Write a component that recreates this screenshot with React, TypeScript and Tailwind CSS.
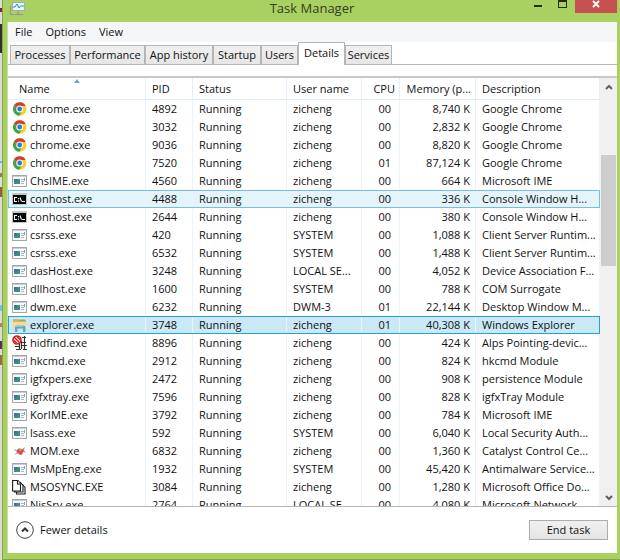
import clsx from "clsx";

type Kind = "chrome" | "app" | "console" | "folder" | "hid" | "mom" | "docs";

interface Process {
  kind: Kind;
  name: string;
  pid: string;
  user: string;
  cpu: string;
  memory: string;
  description: string;
}

const tabs = [
  { label: "Processes", width: "w-15" },
  { label: "Performance", width: "w-[75px]" },
  { label: "App history", width: "w-[68px]" },
  { label: "Startup", width: "w-12" },
  { label: "Users", width: "w-[37px]" },
  { label: "Details", width: "w-[47px]" },
  { label: "Services", width: "w-[47px]" },
];

const row = (
  kind: Kind,
  name: string,
  pid: string,
  user: string,
  cpu: string,
  memory: string,
  description: string
): Process => ({ kind, name, pid, user, cpu, memory, description });

const processes: Process[] = [
  row("chrome", "chrome.exe", "4892", "zicheng", "00", "8,740 K", "Google Chrome"),
  row("chrome", "chrome.exe", "3032", "zicheng", "00", "2,832 K", "Google Chrome"),
  row("chrome", "chrome.exe", "9036", "zicheng", "00", "8,820 K", "Google Chrome"),
  row("chrome", "chrome.exe", "7520", "zicheng", "01", "87,124 K", "Google Chrome"),
  row("app", "ChsIME.exe", "4560", "zicheng", "00", "664 K", "Microsoft IME"),
  row("console", "conhost.exe", "4488", "zicheng", "00", "336 K", "Console Window H..."),
  row("console", "conhost.exe", "2644", "zicheng", "00", "380 K", "Console Window H..."),
  row("app", "csrss.exe", "420", "SYSTEM", "00", "1,088 K", "Client Server Runtim..."),
  row("app", "csrss.exe", "6532", "SYSTEM", "00", "1,488 K", "Client Server Runtim..."),
  row("app", "dasHost.exe", "3248", "LOCAL SE...", "00", "4,052 K", "Device Association F..."),
  row("app", "dllhost.exe", "1600", "SYSTEM", "00", "788 K", "COM Surrogate"),
  row("app", "dwm.exe", "6232", "DWM-3", "01", "22,144 K", "Desktop Window M..."),
  row("folder", "explorer.exe", "3748", "zicheng", "01", "40,308 K", "Windows Explorer"),
  row("hid", "hidfind.exe", "8896", "zicheng", "00", "424 K", "Alps Pointing-devic..."),
  row("app", "hkcmd.exe", "2912", "zicheng", "00", "824 K", "hkcmd Module"),
  row("app", "igfxpers.exe", "2472", "zicheng", "00", "908 K", "persistence Module"),
  row("app", "igfxtray.exe", "7596", "zicheng", "00", "828 K", "igfxTray Module"),
  row("app", "KorIME.exe", "3792", "zicheng", "00", "784 K", "Microsoft IME"),
  row("app", "lsass.exe", "592", "SYSTEM", "00", "6,040 K", "Local Security Auth..."),
  row("mom", "MOM.exe", "6832", "zicheng", "00", "1,360 K", "Catalyst Control Ce..."),
  row("app", "MsMpEng.exe", "1932", "SYSTEM", "00", "45,420 K", "Antimalware Service..."),
  row("docs", "MSOSYNC.EXE", "3084", "zicheng", "00", "1,280 K", "Microsoft Office Do..."),
  row("app", "NisSrv.exe", "2764", "LOCAL SE...", "00", "4,080 K", "Microsoft Network ..."),
];

const HOVERED_PID = "4488";
const SELECTED_PID = "3748";

const ProcessIcon = ({ kind }: { kind: Kind }) => {
  switch (kind) {
    case "chrome":
      return (
        <svg viewBox="0 0 16 16" className="size-4 shrink-0">
          <circle cx="7.700" cy="8" r="6.700" fill="#f7cf2b" />
          <path d="M7.700 8 2 4.500A6.700 6.700 0 0 1 13.700 5H7.700z" fill="#d8382e" />
          <path d="M2 4.500A6.700 6.700 0 0 0 7.300 14.700L10.400 9.500 7.700 8z" fill="#43a152" />
          <circle cx="7.700" cy="8" r="3.500" fill="#f2f7fa" />
          <circle cx="7.700" cy="8" r="2.400" fill="#2c7fc9" />
        </svg>
      );
    case "console":
      return (
        <svg viewBox="0 0 16 16" className="size-4 shrink-0">
          <rect y="2" width="15" height="12" fill="#c4c6c8" />
          <rect x="1" y="4" width="13" height="9" fill="#050505" />
          <path
            d="M5 6.500H2.500v4H5M6.500 7v1.200M6.500 9.500v1.200M8 6.500l1.500 4M10 10.500h3"
            fill="none"
            stroke="#f2f2f2"
            strokeWidth="1.100"
          />
        </svg>
      );
    case "folder":
      return (
        <svg viewBox="0 0 16 16" className="size-4 shrink-0">
          <path d="M1 2h5l1 1h7v10H1z" fill="#dcb25a" />
          <path d="M7 2.500h6V4H7z" fill="#78b86f" />
          <path d="M.500 5h14L14 13H1z" fill="#f5dd98" />
          <path d="M3 15v-4.500Q3 8.500 5 8.500h6q2.500 0 2.500 2V15H11v-3.500H5.500V15z" fill="#55a8e0" />
          <path d="M4 10q0-1 1.500-1h5.500" fill="none" stroke="#a9dbf6" />
        </svg>
      );
    case "hid":
      return (
        <svg viewBox="0 0 16 16" className="size-4 shrink-0">
          <path
            d="M10 2.500h4M12.500 1v14M9 7.500h5M9 10.500h6M3 11.500h5M7.500 9v6M9.500 6v8M4 14.500h5M11 14.500h4"
            fill="none"
            stroke="#333"
            strokeWidth="1.200"
          />
          <circle cx="5" cy="5" r="4" fill="#fff" stroke="#d8201c" strokeWidth="1.600" />
          <path d="m2 2 6 6M5 1.500 8.500 5M1.500 5 5 8.500" stroke="#d8201c" strokeWidth="1.500" />
        </svg>
      );
    case "mom":
      return (
        <svg viewBox="0 0 16 16" className="size-4 shrink-0">
          <path d="m1 6 4 1 2-2 3 1 3-2-1 3 2 3-3-1-1 3-3-2-5 2 3-3z" fill="#b5a49f" />
          <path d="m5 7 2-1 3 1 2-1-1 3-1 2-2 1-3-3z" fill="#dc4a3b" />
          <path d="m7 7 2 1" stroke="#f2a39a" />
        </svg>
      );
    case "docs":
      return (
        <svg viewBox="0 0 16 16" className="size-4 shrink-0">
          <g fill="#fff" stroke="#1b1b1b" strokeWidth="1.100">
            <path d="M4.500 5.500h6l2.500 3v6.500H4.500z" />
            <path d="M2.500 3.500h6l2.500 3v6.500H2.500z" />
            <path d="M.600 1.500h5.400l2.500 3v7.500H.600z" />
            <path d="M5.500 1.500v3.500h3" />
          </g>
        </svg>
      );
    default:
      return (
        <svg viewBox="0 0 16 16" className="size-4 shrink-0">
          <rect x=".500" y="2.500" width="14" height="11" fill="#fbfbfb" stroke="#a3a7ab" />
          <path d="M1 3.500h13" stroke="#c8ccd0" />
          <rect x="2" y="6" width="6" height="5" fill="#3e9180" />
          <rect x="2" y="6" width="3" height="3" fill="#44709f" />
          <path d="M9 6.500h3M9 8.500h3M9 10.500h3" stroke="#aab6c0" />
          <path d="M12.500 5v3" stroke="#7aa5cc" />
        </svg>
      );
  }
};

// Sliver of the desktop that stays visible beside the window
const DesktopEdge = () => (
  <div className="flex w-0.5 shrink-0 flex-col bg-[#dcdcdc]">
    <div className="mt-2 h-1 bg-[#8a1846]" />
    <div className="mt-3 h-[29px] bg-[#34302f]" />
    <div className="mt-[108px] h-0.5 bg-[#79b9dc]" />
    <div className="mt-2.5 h-1 bg-[#a9793c]" />
    <div className="mt-2.5 h-2.5 bg-[#9c5c36]" />
    <div className="mt-27 h-1.5 bg-[#6dc3ea]" />
    <div className="mt-3 h-1 bg-[#a98a54]" />
    <div className="mt-3.5 h-2 bg-[#5b2a5e]" />
    <div className="mt-1.5 h-2.5 bg-[#a3683c]" />
  </div>
);

const TitleBar = () => (
  <header className="relative flex h-[22px] shrink-0 items-start justify-end">
    <svg viewBox="0 0 16 16" className="absolute left-0.5 top-0 size-4">
      <path d="M1.500 6v8M1 14.500h4M9 11v3M6 14.500h8" stroke="#8d9494" fill="none" />
      <rect x="3.500" y="2.500" width="12" height="8" fill="#e9f5fb" stroke="#a5adb2" />
      <path d="M4 7h2l2-3 2 4 1.500-2H15" fill="none" stroke="#2b8fc4" />
    </svg>
    <h1 className="absolute inset-x-0 top-0 text-center text-[13px] leading-4 text-[#343d20]">
      Task Manager
    </h1>
    <div className="relative flex">
      <button aria-label="Minimize" className="flex h-[7px] w-7 items-end justify-center">
        <span className="h-0.5 w-2 bg-[#262b18]" />
      </button>
      <button aria-label="Maximize" className="flex h-2 w-5 justify-center">
        <span className="h-2 w-[9px] border border-t-2 border-[#262b18]" />
      </button>
      <button
        aria-label="Close"
        className="ml-[3px] flex h-[13px] w-[42px] justify-center bg-[#c75050]">
        <svg viewBox="0 0 8 8" className="size-2">
          <path d="m1 1 6 6M7 1 1 7" stroke="#fff" strokeWidth="1.800" />
        </svg>
      </button>
    </div>
  </header>
);

const MenuBar = () => (
  <nav className="flex h-5 shrink-0 items-center gap-[13px] bg-[#f5f6f7] px-[7px]">
    <button>File</button>
    <button>Options</button>
    <button>View</button>
  </nav>
);

const TabBar = () => (
  <div role="tablist" className="flex h-[23px] shrink-0 items-end border-b border-[#b5b5b5] pl-0.5">
    {tabs.map(({ label, width }) => {
      const active = label === "Details";
      return (
        <button
          key={label}
          role="tab"
          aria-selected={active}
          className={clsx(
            "flex shrink-0 items-center justify-center whitespace-nowrap border border-b-0 border-[#b5b5b5]",
            width,
            active
              ? "-mb-px h-[23px] bg-white pb-0.5"
              : "h-[19px] bg-linear-to-b from-[#f0f0f0] to-[#e6e6e6]"
          )}>
          {label}
        </button>
      );
    })}
  </div>
);

const ProcessTable = () => (
  <table className="w-full table-fixed border-separate border-spacing-0">
    <colgroup>
      <col className="w-[138px]" />
      <col className="w-[47px]" />
      <col className="w-[94px]" />
      <col className="w-[75px]" />
      <col className="w-[38px]" />
      <col className="w-[76px]" />
      <col />
    </colgroup>
    <thead>
      <tr className="h-[22px] text-left *:border-b *:border-r *:border-[#e3eff8] *:p-0 *:font-normal *:whitespace-nowrap">
        <th className="relative">
          <svg viewBox="0 0 6 4" className="absolute left-[66px] top-px h-1 w-1.5">
            <path d="M0 4 3 0l3 4z" fill="#6fa5cd" />
          </svg>
          <span className="pl-[11px]">Name</span>
        </th>
        <th>
          <span className="pl-1.5">PID</span>
        </th>
        <th>
          <span className="pl-1.5">Status</span>
        </th>
        <th>
          <span className="pl-1.5">User name</span>
        </th>
        <th className="text-right">
          <span className="pr-1">CPU</span>
        </th>
        <th className="text-right">
          <span className="pr-1">Memory (p...</span>
        </th>
        <th>
          <span className="pl-1.5">Description</span>
        </th>
      </tr>
    </thead>
    <tbody>
      {processes.map((p) => (
        <tr
          key={p.pid}
          className={clsx(
            "h-[18px] leading-4 *:border-r *:border-[#eaf4fb] *:py-0 *:pl-1.5 *:whitespace-nowrap",
            p.pid === HOVERED_PID && "bg-[#e5f3fb] outline -outline-offset-1 outline-[#70c0e7]",
            p.pid === SELECTED_PID && "bg-[#cbe8f6] outline -outline-offset-1 outline-[#26a0da]"
          )}>
          <td>
            <div className="-ml-0.5 flex items-center gap-0.5">
              <ProcessIcon kind={p.kind} />
              {p.name}
            </div>
          </td>
          <td>{p.pid}</td>
          <td>Running</td>
          <td>{p.user}</td>
          <td className="pr-2 text-right">{p.cpu}</td>
          <td className="pr-[5px] text-right">{p.memory}</td>
          <td>{p.description}</td>
        </tr>
      ))}
    </tbody>
  </table>
);

const ScrollBar = () => (
  <div className="flex w-[17px] shrink-0 flex-col items-center bg-[#f0f0f0]">
    <button aria-label="Scroll up" className="flex h-[17px] items-center">
      <svg viewBox="0 0 8 6" className="h-1.5 w-2">
        <path d="m1 5 3-3 3 3" fill="none" stroke="#606060" strokeWidth="2" />
      </svg>
    </button>
    <div className="w-full grow pt-[60px]">
      <div className="mx-px h-[111px] bg-[#cdcdcd]" />
    </div>
    <button aria-label="Scroll down" className="flex h-[17px] items-center">
      <svg viewBox="0 0 8 6" className="h-1.5 w-2">
        <path d="m1 1 3 3 3-3" fill="none" stroke="#606060" strokeWidth="2" />
      </svg>
    </button>
  </div>
);

const Footer = () => (
  <footer className="flex h-[46px] shrink-0 items-center justify-between pl-2 pr-[9px]">
    <button className="flex items-center gap-1.5">
      <svg viewBox="0 0 18 18" className="size-[18px]">
        <circle cx="9" cy="9" r="8.300" fill="none" stroke="#444" />
        <path d="m6 10.500 3-3 3 3" fill="none" stroke="#333" strokeWidth="2" />
      </svg>
      Fewer details
    </button>
    <button className="h-5 w-[79px] border border-[#acacac] bg-linear-to-b from-[#f0f0f0] to-[#e5e5e5]">
      End task
    </button>
  </footer>
);

const App = () => {
  return (
    <div className="flex h-screen font-['Open_Sans',sans-serif] text-[11px] leading-4 text-[#111]">
      <DesktopEdge />
      <div className="flex min-w-0 grow flex-col border-b border-l border-[#86a548] bg-[#a9d162] pb-[6px] pl-1 pr-[3px]">
        <TitleBar />
        <main className="flex min-h-0 grow flex-col border-l border-[#c9dfa0] bg-white">
          <MenuBar />
          <TabBar />
          <section className="mt-[11px] flex min-h-0 grow overflow-hidden border-b border-t-2 border-[#b5b5b5] border-t-[#c8c8c8]">
            <div className="min-w-0 grow">
              <ProcessTable />
            </div>
            <ScrollBar />
          </section>
          <Footer />
        </main>
      </div>
    </div>
  );
};

export default App;
